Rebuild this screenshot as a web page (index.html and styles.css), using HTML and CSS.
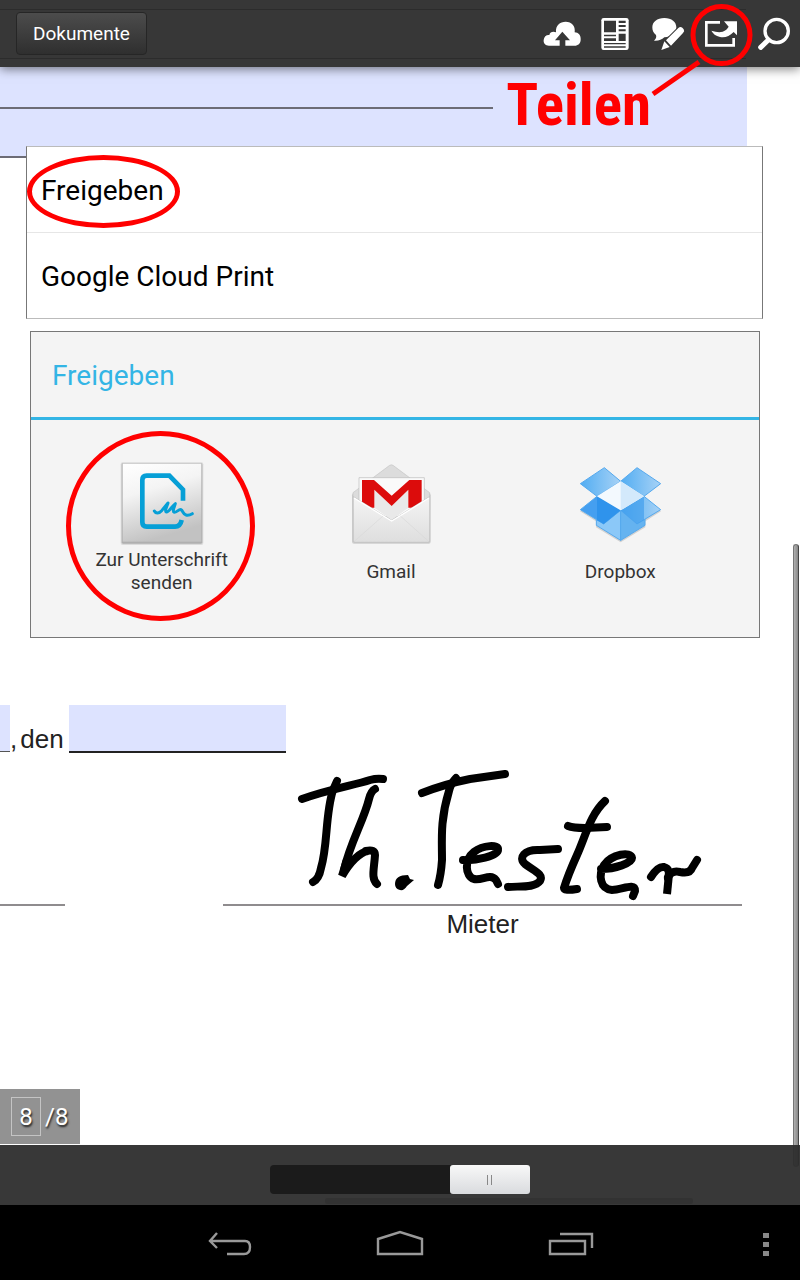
FILE: index.html
```html
<!DOCTYPE html>
<html lang="de">
<head>
<meta charset="utf-8">
<meta name="viewport" content="width=device-width, initial-scale=1">
<title>Dokumente</title>
<link rel="stylesheet" href="styles.css">
</head>
<body>
<header class="toolbar">
  <button class="docs-button" type="button">Dokumente</button>
  <div class="tools">
    <button class="tool" type="button" aria-label="Hochladen">
      <svg viewBox="37 51 114 102"><path fill="#fff" d="M55 137C44 137 38 130 39 120C40 110 47 104 56 105C58 97 66 93 76 97C74 76 88 65 105 65C123 65 135 78 132 97C143 97 151 106 150 119C150 130 142 137 132 137H104V121H118L95 95L73 121H87V137Z"/></svg>
    </button>
    <button class="tool" type="button" aria-label="Seitenansicht">
      <svg viewBox="198 51 114 102"><rect x="214" y="54" width="82" height="96" rx="7" fill="#fff"/><path fill="#373737" d="M222 62h36v35h-36zM266 62h21v7h-21zM266 75h21v6h-21zM266 88h21v6h-21zM266 101h21v22h-21zM222 104h36v5h-36zM222 115h36v8h-36zM222 129h65v4h-65zM222 139h65v4h-65z"/></svg>
    </button>
    <button class="tool" type="button" aria-label="Kommentieren">
      <svg viewBox="356 51 114 102"><path fill="#fff" d="M402 54C424 54 438 66 438 82C438 98 424 111 402 112C394 119 385 123 371 122C377 117 379 111 377 105C369 99 366 91 366 82C366 66 380 54 402 54Z"/><path fill="#fff" stroke="#373737" stroke-width="6" paint-order="stroke" d="M444 84Q450 78 456 83L460 88Q464 94 458 99L422 137L407 121ZM402 124L418 141L393 150Z"/></svg>
    </button>
    <button class="tool" type="button" aria-label="Teilen">
      <svg viewBox="516 51 114 102"><path fill="none" stroke="#fff" stroke-width="8" d="M570 67H529V136H611V114"/><path fill="#fff" d="M582 64H621V106L611 96C598 109 585 114 570 111C557 108 549 101 544 92C557 96 568 98 578 95C587 92 592 86 596 80Z"/></svg>
      <svg class="share-mark" viewBox="0 0 100 96" aria-hidden="true"><circle cx="68.500" cy="33" r="28.500"/><path d="M46 60L0 92"/></svg>
    </button>
    <button class="tool" type="button" aria-label="Suchen">
      <svg viewBox="675 51 114 102"><circle cx="740" cy="93" r="35" fill="none" stroke="#fff" stroke-width="10"/><path stroke="#fff" stroke-width="15" stroke-linecap="round" d="M715 120L692 142"/></svg>
    </button>
  </div>
  <span class="share-caption">Teilen</span>
</header>

<main class="document">
  <div class="form-top">
    <input class="line-field line-field-short" type="text" aria-label="Angaben">
    <input class="line-field line-field-full" type="text" aria-label="Weitere Angaben">
  </div>

  <ul class="menu">
    <li><button class="menu-item" type="button">Freigeben<span class="ring ring-menu"></span></button></li>
    <li><button class="menu-item" type="button">Google Cloud Print</button></li>
  </ul>

  <section class="dialog">
    <h2 class="dialog-title">Freigeben</h2>
    <div class="apps">
      <button class="app" type="button">
        <svg viewBox="208 123 252 252">
          <defs><linearGradient id="tile" x1="0" y1="0" x2=".3" y2="1"><stop offset="0" stop-color="#fff"/><stop offset=".4" stop-color="#f4f4f4"/><stop offset="1" stop-color="#c2c2c2"/></linearGradient></defs>
          <rect x="210" y="127" width="248" height="248" rx="6" fill="#000" opacity=".1"/><rect x="213" y="130" width="242" height="241" rx="4" fill="#000" opacity=".2"/>
          <rect x="216" y="131" width="236" height="234" fill="url(#tile)"/>
          <g fill="none" stroke="#069fd6"><path stroke-width="14" d="M397 242V209L356 167H288Q275 167 275 180V307Q275 320 288 320H373Q389 320 393 300"/><path stroke-width="9" stroke-linecap="round" stroke-linejoin="round" d="M311 273C315 281 325 281 333 272L352 249C349 258 341 274 347 276C354 278 366 256 374 251C371 261 364 275 371 277C379 277 384 267 391 269C397 272 397 283 406 285C414 287 420 284 425 281"/></g>
        </svg>
        <span class="app-label">Zur Unterschrift senden</span>
        <span class="ring ring-app"></span>
      </button>
      <button class="app" type="button">
        <svg viewBox="39 33 246 252">
          <defs><linearGradient id="envelope" x1="0" y1="0" x2="0" y2="1"><stop offset="0" stop-color="#f4f4f4"/><stop offset="1" stop-color="#dedede"/></linearGradient></defs>
          <rect x="45" y="130" width="236" height="151" rx="6" fill="#000" opacity=".16"/>
          <path fill="#dcdcdc" stroke="#c4c4c4" stroke-width="2" d="M48 128L158 46Q163 43 168 46L278 128V180H48Z"/>
          <path fill="#fafafa" stroke="#bbb" stroke-width="2" d="M66 83H262V200H66Z"/>
          <path fill="#e9e9e9" d="M112 173V119L164 168L214 119V173L164 210Z"/>
          <path fill="#dc0c0c" d="M75 90H111L164 137L217 90H254V173H214V119L164 168L112 119V173H75Z"/>
          <path fill="url(#envelope)" stroke="#bcbcbc" stroke-width="2" d="M49 140L164 211L278 140V271Q278 277 272 277H55Q49 277 49 271Z"/>
          <path fill="none" stroke="#fff" stroke-width="4" d="M51 144L164 213L276 144"/>
          <path fill="none" stroke="#d8d8d8" stroke-width="2" d="M52 274L138 198M275 274L190 198"/>
        </svg>
        <span class="app-label">Gmail</span>
      </button>
      <button class="app" type="button">
        <svg viewBox="54 33 252 252">
          <defs><linearGradient id="boxdark" x1="0" y1="0" x2="1" y2="0"><stop offset="0" stop-color="#52adf2"/><stop offset="1" stop-color="#a7d2f6"/></linearGradient></defs>
          <path fill="#000" opacity=".14" d="M60 184L108 214V232L182 277L256 232V214L303 184L256 145H108Z"/>
          <g stroke="#55a9ee" stroke-width="3" stroke-linejoin="round">
            <path fill="url(#boxdark)" d="M133 53L182 94L111 139L61 101Z"/>
            <path fill="url(#boxdark)" d="M231 53L182 94L252 139L302 101Z"/>
            <path fill="#8bc8f8" d="M109 207L182 181V271L109 226Z"/>
            <path fill="#65b3f0" d="M255 207L182 181V271L255 226Z"/>
            <path fill="#459ff0" d="M111 139L182 181L131 222L61 179Z"/>
            <path fill="url(#boxdark)" d="M252 139L182 181L231 222L302 179Z"/>
          </g>
          <path fill="#2f93ec" d="M111 139L182 181L131 222L111 211Z"/>
          <path fill="#3f9cec" d="M252 139L182 181L231 222L252 211Z" opacity=".65"/>
          <path fill="#f3f9fe" d="M182 94L252 139L182 181L111 139Z"/><path fill="#d3e9fb" d="M182 94L252 139L182 181Z"/>
        </svg>
        <span class="app-label">Dropbox</span>
      </button>
    </div>
  </section>

  <div class="date-row">
    <input class="blank blank-place" type="text" aria-label="Ort">
    <label class="date-label" for="date"><span>,</span> <span>den</span></label>
    <input class="blank blank-date" id="date" type="text">
  </div>

  <div class="signatures">
    <div class="signature-left"></div>
    <figure class="signature">
      <svg class="handwriting" viewBox="298 768 406 132" role="img" aria-label="Unterschrift Th. Tester">
        <g fill="none" stroke="#000" stroke-width="8" stroke-linecap="round" stroke-linejoin="round">
          <path d="M302 799C330 789 355 785 370 780Q377 778 383 779"/>
          <path d="M337 781L333 790C325 815 328 845 321 868Q319 879 313 882"/>
          <path d="M375 789Q371 791 369 799C364 820 350 843 344 870"/>
          <path stroke-linecap="butt" stroke-linejoin="miter" d="M347 860L342 876C350 862 360 852 368 851"/>
          <path d="M366 851Q375 849 375 855C374 870 371 878 377 884"/>
          <path d="M422 793C440 786 460 781 470 779L505 774"/>
          <path d="M456 778Q451 783 449 791C440 820 442 840 442 860Q441 875 438 885"/>
          <path d="M463 860C475 861 498 856 498 850C499 844 483 845 474 852C464 860 465 876 474 879C482 881 490 873 496 880L498 884"/>
          <path d="M558 849L540 850C524 849 518 858 525 864C534 871 544 874 540 881C535 888 520 886 508 887"/>
          <path d="M605 801C590 815 586 835 577 855Q568 875 564 888Q564 891 577 889"/>
          <path d="M568 826Q573 828 585 828L607 827"/>
          <path d="M601 869C615 869 632 863 632 858C631 851 612 854 604 865C598 875 600 889 612 890C622 890 635 882 635 891L633 896"/>
          <path d="M651 877Q658 866 664 867Q671 869 668 878M668 877Q672 870 680 872Q690 874 692 868L697 860"/>
          <path stroke-linecap="butt" d="M669 874L667 894"/>
        </g>
        <path d="M395 884Q395 875 408 875L410 879L414 880L407 886Q404 891 400 890Q395 889 395 884Z"/>
      </svg>
      <figcaption class="signature-name">Mieter</figcaption>
    </figure>
  </div>

  <div class="page-badge"><input class="page-input" type="text" value="8" aria-label="Seite"><span>/8</span></div>
  <div class="scrollbar"></div>
</main>

<footer class="pager">
  <input class="page-slider" type="range" min="1" max="8" value="8" aria-label="Seite wählen">
</footer>

<nav class="system-bar">
  <div class="system-main">
    <button class="system-button" type="button" aria-label="Zurück"><svg viewBox="206 1226 48 36"><path d="M211 1242H246Q251 1242 251 1248Q251 1255 245 1255H228M218 1234L211 1242L218 1249"/></svg></button>
    <button class="system-button" type="button" aria-label="Startseite"><svg viewBox="376 1226 48 36"><path d="M378 1240L400 1233L422 1240V1255H378Z"/></svg></button>
    <button class="system-button" type="button" aria-label="Letzte Apps"><svg viewBox="547 1226 48 36"><path d="M550 1242H585V1255H550ZM560 1235H592V1249"/></svg></button>
  </div>
  <button class="system-more" type="button" aria-label="Mehr"><svg viewBox="0 0 6 36"><path d="M0 8h6v5h-6zM0 17h6v5h-6zM0 26h6v5h-6z"/></svg></button>
</nav>
</body>
</html>
```
FILE: styles.css
```css
* { box-sizing: border-box; }

body {
  margin: 0;
  min-height: 100vh;
  display: flex;
  flex-direction: column;
  background: #fff;
  font-family: Roboto, "Noto Sans", sans-serif;
  overflow-x: hidden;
}

button, input { font: inherit; margin: 0; }
button { border: 0; padding: 0; background: none; cursor: pointer; }
svg { display: block; overflow: visible; }

.toolbar {
  position: relative;
  z-index: 3;
  display: flex;
  align-items: center;
  justify-content: space-between;
  height: 67px;
  padding-left: 16px;
  background: #373737;
  box-shadow: 0 2px 10px rgba(0, 0, 0, .5);
}
.toolbar::before {
  content: "";
  position: absolute;
  inset: 9px 54px 8px 0;
  border: solid #2c2c2c;
  border-width: 1px 0;
}
.docs-button {
  position: relative;
  height: 43px;
  padding: 0 16px;
  border: 1px solid #262626;
  border-radius: 4px;
  background: linear-gradient(#4c4c4c, #2f2f2f);
  color: #fff;
  font-size: 19px;
}
.tools { position: relative; display: flex; }
.tool {
  position: relative;
  display: flex;
  align-items: center;
  justify-content: center;
  width: 53px;
  height: 67px;
}
.tool svg { width: 38px; height: 34px; }
.tool .share-mark {
  position: absolute;
  left: -41px;
  top: 2px;
  width: 100px;
  height: 96px;
  fill: none;
  stroke: #f00;
  stroke-width: 5;
  pointer-events: none;
}
.share-caption {
  position: absolute;
  right: 149px;
  top: 70px;
  color: #f00;
  font-family: "Roboto Condensed", Roboto, sans-serif;
  font-size: 59px;
  font-weight: 700;
  line-height: 70px;
}

.document { position: relative; flex: 1; }
.form-top {
  height: 90px;
  margin-right: 53px;
  background: #dde3ff;
}
.line-field {
  display: block;
  padding: 0;
  border: solid #6c6c76;
  border-width: 0 0 2px;
  background: none;
}
.line-field-short { width: 66%; height: 42px; }
.line-field-full { width: 100%; height: 49px; }

.menu {
  position: relative;
  margin: -11px 37px 0 26px;
  padding: 0;
  list-style: none;
  background: #fff;
  border: 1px solid #777;
  border-top-color: #bbb;
  border-bottom-color: #bbb;
}
.menu li + li { border-top: 1px solid #e6e6e6; }
.menu-item {
  position: relative;
  display: block;
  width: 100%;
  height: 85px;
  padding: 2px 14px 0;
  color: #000;
  font-size: 28px;
  text-align: left;
}
.ring {
  position: absolute;
  border: 5px solid #f00;
  border-radius: 50%;
  pointer-events: none;
}
.ring-menu { left: 0; top: 8px; width: 153px; height: 73px; }
.ring-app { left: calc(50% - 96px); top: -30px; width: 189px; height: 190px; }

.dialog {
  margin: 12px 40px 0 30px;
  border: 1px solid #777;
  background: #f4f4f4;
}
.dialog-title {
  margin: 0;
  padding: 2px 21px 0;
  border-bottom: 3px solid #33b5e5;
  color: #33b5e5;
  font-size: 28px;
  font-weight: 400;
  line-height: 83px;
}
.apps {
  display: grid;
  grid-template-columns: repeat(3, 1fr);
  padding: 41px 24px 43px 16px;
}
.app {
  position: relative;
  display: flex;
  flex-direction: column;
  align-items: center;
  gap: 3px;
  color: #333;
}
.app svg { width: 84px; height: 84px; }
.app-label {
  display: flex;
  align-items: center;
  height: 46px;
  max-width: 150px;
  font-size: 19px;
  line-height: 23px;
}

.date-row {
  display: flex;
  align-items: flex-end;
  margin-top: 67px;
  font-family: "Liberation Sans", sans-serif;
  font-size: 26px;
  color: #222;
}
.blank {
  height: 48px;
  border: solid #222;
  border-width: 0 0 2px;
  background: #dde3ff;
}
.blank-place { width: 10px; height: 47px; margin-bottom: 1px; padding: 0; border-bottom: 1px solid #555; }
.blank-date { width: 217px; margin-left: 5px; }
.date-label { display: flex; gap: 3px; line-height: 28px; }

.signatures {
  display: flex;
  gap: 158px;
  margin: 15px 58px 0 0;
}
.signature-left { width: 65px; height: 138px; border-bottom: 2px solid #8f8c8e; }
.signature { flex: 1; margin: 0; }
.handwriting {
  box-sizing: content-box;
  width: 406px;
  height: 132px;
  padding: 0 38px 6px 75px;
}
.signature-name {
  border-top: 2px solid #8f8c8e;
  margin-top: -2px;
  color: #222;
  font-family: "Liberation Sans", sans-serif;
  font-size: 26px;
  line-height: 36px;
  text-align: center;
}

.page-badge {
  position: absolute;
  left: 0;
  bottom: 1px;
  display: flex;
  align-items: center;
  gap: 4px;
  width: 80px;
  height: 55px;
  padding-left: 11px;
  background: #929292;
  color: #fff;
  font-size: 24px;
  text-shadow: 1px 2px 2px #222;
}
.page-input {
  width: 30px;
  height: 39px;
  padding: 0;
  border: 1px solid #c4c4c4;
  background: none;
  color: inherit;
  text-align: center;
  text-shadow: inherit;
}
.scrollbar {
  position: absolute;
  top: 477px;
  right: 1px;
  bottom: -22px;
  width: 6px;
  border-radius: 3px;
  border: 1px solid #777;
  border-right-color: #444;
  background: linear-gradient(90deg, #b0b0b0, #888);
}

.pager {
  position: relative;
  display: flex;
  justify-content: center;
  align-items: center;
  height: 60px;
  padding-top: 8px;
  background: rgba(45, 45, 45, .95);
}
.pager::after {
  content: "";
  position: absolute;
  left: 325px;
  right: 107px;
  bottom: 1px;
  height: 6px;
  border-radius: 3px;
  background: #323232;
}
.page-slider {
  appearance: none;
  width: 260px;
  height: 29px;
  border-radius: 4px;
  background: #1b1b1b;
}
.page-slider::-webkit-slider-thumb {
  appearance: none;
  width: 80px;
  height: 29px;
  border-radius: 3px;
  background:
    linear-gradient(#888, #888) 37px 10px / 1px 10px no-repeat,
    linear-gradient(#888, #888) 41px 10px / 1px 10px no-repeat,
    linear-gradient(#f8f8f8, #d9dbde);
}

.system-bar {
  position: relative;
  z-index: 1;
  display: grid;
  grid-template-columns: 1fr auto 1fr;
  height: 75px;
  background: #000;
}
.system-main { grid-column: 2; display: flex; }
.system-button, .system-more {
  display: flex;
  align-items: center;
  justify-content: center;
  width: 171px;
}
.system-button svg {
  width: 48px;
  height: 36px;
  fill: none;
  stroke: #999;
  stroke-width: 2.4;
}
.system-more { width: 69px; justify-self: end; }
.system-more svg { width: 6px; height: 36px; fill: #888; }
```
